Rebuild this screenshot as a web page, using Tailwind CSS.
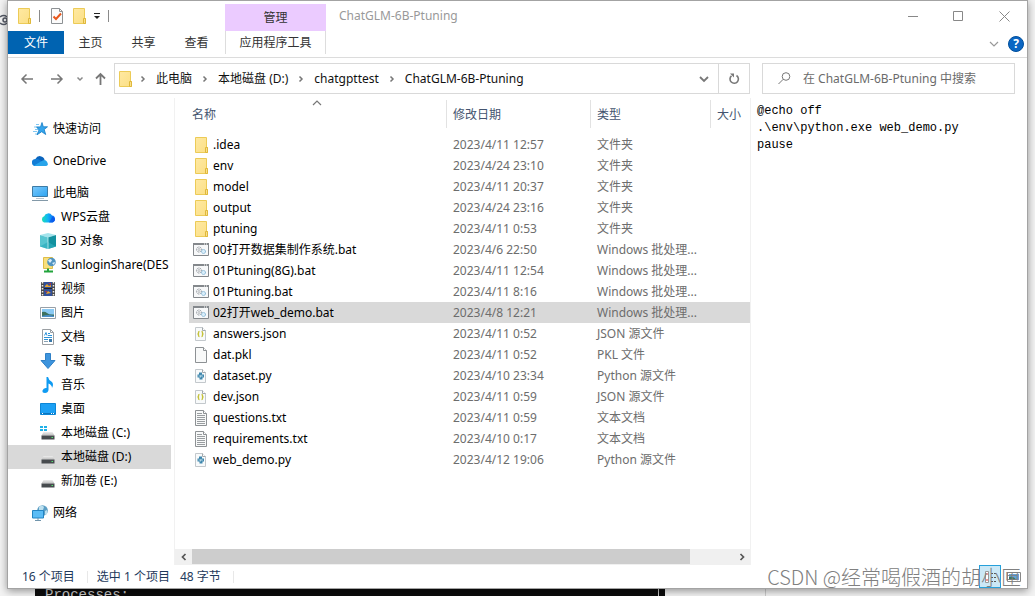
<!DOCTYPE html>
<html lang="zh-CN">
<head>
<meta charset="utf-8">
<title>ChatGLM-6B-Ptuning</title>
<script src="https://cdn.jsdelivr.net/npm/@tailwindcss/browser@4"></script>
</head>
<body class="bg-[#f3f3f3] font-['Noto_Sans','Noto_Sans_CJK_SC',sans-serif] text-xs text-black">
<svg class="absolute size-0" aria-hidden="true">
  <defs>
    <linearGradient id="gFold" x1="0" y1="0" x2="1" y2="1"><stop offset="0" stop-color="#ffe9a2"/><stop offset="1" stop-color="#fbdf85"/></linearGradient>
    <linearGradient id="gBlue" x1="0" y1="0" x2="1" y2="1"><stop offset="0" stop-color="#7cc9fb"/><stop offset="1" stop-color="#2ca4f2"/></linearGradient>
    <linearGradient id="gWps" x1="0" y1="0" x2="1" y2="0"><stop offset="0" stop-color="#1ce0b4"/><stop offset=".45" stop-color="#12b4f5"/><stop offset="1" stop-color="#0a5cf5"/></linearGradient>
    <linearGradient id="gDrive" x1="0" y1="0" x2="0" y2="1"><stop offset="0" stop-color="#eeeeee"/><stop offset="1" stop-color="#bcbcbc"/></linearGradient>
  </defs>
  <symbol id="folder" viewBox="0 0 16 16"><path d="M2.5.5h11v9.500l1 .5v5h-12z" fill="url(#gFold)" stroke="#eccb57"/><path d="M12.500 15.500v-5h2v5z" fill="#fbe08a" stroke="#dfb83c"/></symbol>
  <symbol id="bat" viewBox="0 0 16 16"><path d="M.5 1.500h15v12H.5z" fill="#f7f8f9" stroke="#84888c"/><path d="M0 1h16v2H0z" fill="#84888c"/><path d="M11 2h1M13 2h1" stroke="#fff"/><circle cx="6" cy="7.500" r="2.500" fill="none" stroke="#8c9299" stroke-dasharray="1.200 .6"/><circle cx="6" cy="7.500" r="1" fill="none" stroke="#9da3a8" stroke-width=".7"/><circle cx="10.500" cy="9.500" r="2" fill="#d9eefa" stroke="#7aaed0" stroke-dasharray="1.200 .5"/></symbol>
  <symbol id="page" viewBox="0 0 16 16"><path d="M2.500.5h8l3 3v12h-11z" fill="#f8f9f9" stroke="#8d9194"/><path d="M10.500.5v3h3" fill="#fff" stroke="#8d9194"/></symbol>
  <symbol id="json" viewBox="0 0 16 16"><path d="M2.500 1.500h7l3 3v10h-10z" fill="#f8fafb" stroke="#c3c8cc"/><path d="M9.500 1.500v3h3" fill="#fff" stroke="#a3a8ac"/><path d="M6.500 5.500q-1 0-1 1v1l-.5.5.500.5v1q0 1 1 1M8.500 5.500q1 0 1 1v1l.5.5-.5.5v1q0 1-1 1" fill="none" stroke="#c5c23a" stroke-width="1.300"/></symbol>
  <symbol id="py" viewBox="0 0 16 16"><path d="M2.500 1.500h7l3 3v10h-10z" fill="#f8fafb" stroke="#c3c8cc"/><path d="M9.500 1.500v3h3" fill="#fff" stroke="#a3a8ac"/><path d="M6 4.500h3v2h2v3H9.500v2h-3v-2h-2v-3H6z" fill="#3f87ad"/><path d="M5.500 8h2.500V6.800M7.500 9.500v-1.400H10" fill="none" stroke="#cfe5f0" stroke-width=".7"/></symbol>
  <symbol id="txt" viewBox="0 0 16 16"><use href="#page"/><path d="M4 3.500h5M4 5.500h8M4 7.500h8M4 9.500h8M4 11.500h8M4 13.500h8" stroke="#999da0"/></symbol>
  <symbol id="star" viewBox="0 0 16 16"><path d="M10 1.500l1.300 4.300h4.200l-3.300 2.700 1.500 5-4-2.800L5 13.800l2-4.900-2.500-3h4z" fill="#35a5ec" stroke="#157cc5" stroke-width=".8"/><path d="M4 3.500h3M2 6h3M3 8.500h3M1 10.500h4M3 13h2" stroke="#5fb9ef" stroke-width=".8"/></symbol>
  <symbol id="cloud" viewBox="0 0 16 16"><path d="M3.500 6A4.800 4.800 0 0 1 12.600 7L9 11H1.500z" fill="#0a64bd"/><path d="M3.400 5.900Q5.500 5.300 7.500 7l5.500 3-4 3H3.600A3.500 3.500 0 0 1 3.400 5.900z" fill="#137dd6"/><path d="M2 12.600 9 8.500q4-3.200 6 .2Q17.500 13 13 13H3.600q-1 0-1.600-.4z" fill="#28a4ea"/></symbol>
  <symbol id="pc" viewBox="0 0 16 16"><path d="M.5 1.500h15v10H.5z" fill="url(#gBlue)" stroke="#3d7ba5"/><path d="M4 13.500h8" stroke="#b8c5ce"/><path d="M0 15.500h16" stroke="#8399a8"/></symbol>
  <symbol id="wps" viewBox="0 0 16 16"><path d="M4 13.500a3.300 3.300 0 0 1 .2-6.200A4.300 4.300 0 0 1 12 6.500a3.600 3.600 0 0 1 .5 7z" fill="url(#gWps)"/><path d="M9 13.500l3.500-6q2.500 1.500 2.500 4l-2.500 2z" fill="#0a52e8" opacity=".7"/></symbol>
  <symbol id="cube" viewBox="0 0 16 16"><path d="M0 2l8-2 8 2-8 2.500z" fill="#a4e4ec"/><path d="M0 2l8 2.500V16l-8-2.500z" fill="#57c5d0"/><path d="M16 2L8 4.500V16l8-2.500z" fill="#12919f"/><path d="M0 13.500l8-4.500 8 4.500L8 16z" fill="#2cadbc" opacity=".7"/><path d="M8 4.500V16" stroke="#e1fafa" stroke-width=".7"/></symbol>
  <symbol id="share" viewBox="0 0 16 16"><path d="M3.500.5h9v11h-9z" fill="#f8df7c" stroke="#dfbd47"/><circle cx="11.500" cy="5" r="4.300" fill="#5194bf"/><path d="M8 3.500q3-3 4 0L10 6zm4 2.500l3-1-1 3z" fill="#dceefb"/><path d="M8 11.500v3M4 14.500h9" stroke="#22a43c" stroke-width="2"/></symbol>
  <symbol id="video" viewBox="0 0 16 16"><path d="M1 1h14v14H1z" fill="#4b4b4b"/><path d="M4 1h8v14H4z" fill="#31509a"/><path d="M4 7.500h8" stroke="#222"/><path d="M5 5l2-2 2 2 2-1v2H5zM6 13l2-3 3 2z" fill="#e5a331"/><path d="M8 2h3v2zM5 10h2v2z" fill="#b93939"/><path d="M2.500 1v14M13.500 1v14" stroke="#eee" stroke-width="1.500" stroke-dasharray="1.500 1.500"/></symbol>
  <symbol id="pic" viewBox="0 0 16 16"><path d="M.5 2.500h15v11H.5z" fill="#fff" stroke="#97a0a8"/><path d="M2 4h12v8H2z" fill="#8ac9f3"/><path d="M2 7q3-1 5 1t7 1.500V12H2z" fill="#3d715f"/><path d="M2 11q7-2 12 0v1H2z" fill="#4a8fc8"/></symbol>
  <symbol id="doc" viewBox="0 0 16 16"><path d="M2.500.5h8l3 3v12h-11z" fill="#fff" stroke="#9a9fa3"/><path d="M10.500.5v3h3" fill="none" stroke="#9a9fa3"/><path d="M4.500 6.500l1.500-3 1 3M8 4.500h2M8 6.500h4M4 8.500h8M4 10.500h4" stroke="#2e93d8" fill="none"/><path d="M4 12.500h4" stroke="#8ba3b4"/><path d="M9 10h3v3H9z" fill="#3a79aa"/></symbol>
  <symbol id="down" viewBox="0 0 16 16"><path d="M5.500.5h5v7h4.500L8 15.500 1 7.500h4.500z" fill="#3d94dd" stroke="#2f80c6"/></symbol>
  <symbol id="music" viewBox="0 0 16 16"><path d="M6.500 0H8q.5 3 4 5 2 2.500 0 6 0-3-3.500-4.500V13Q8 16 5 16q-3 0-2.500-2.500Q3.500 10.500 6.500 11z" fill="#0f9bf2"/></symbol>
  <symbol id="desk" viewBox="0 0 16 16"><path d="M.5 2.500h15v11H.5z" fill="#1ca0f4" stroke="#0c86d6"/><path d="M1 12.500h14" stroke="#0b74bd"/><path d="M2 12.500h1M11 12.500h1M13 12.500h1" stroke="#fff"/></symbol>
  <symbol id="drive" viewBox="0 0 16 16"><path d="M3.500 7h9l2 3.500h-13z" fill="url(#gDrive)"/><path d="M1.500 10.500h13v4h-13z" fill="#474b4e"/><path d="M11.500 12.500h1.500" stroke="#53e26f"/></symbol>
  <symbol id="drivec" viewBox="0 0 16 16"><use href="#drive"/><path d="M0 1h3v2H0zM4 1h3v2H4zM0 4h3v2H0zM4 4h3v2H4z" fill="#1fb1e8"/></symbol>
  <symbol id="net" viewBox="0 0 16 16"><circle cx="10.500" cy="5.500" r="5.300" fill="#5c9ec4"/><path d="M7 2q3-3 5 0l-1 3-4 1zM13 6l2-1v4l-2 1z" fill="#bde0ef"/><path d="M.5 5.500h11v7.500H.5z" fill="#5bbcf5" stroke="#2384c2"/><path d="M6 13v2M3 15.500h6" stroke="#7195ac"/></symbol>
  <symbol id="chev" viewBox="0 0 8 8"><path d="M2.500 1.500L5 4 2.500 6.500" fill="none" stroke="#777" stroke-width="1.500"/></symbol>
</svg>

<div class="relative flex min-h-screen flex-col px-[7px]">
  <svg class="absolute left-0 top-[14px] h-3 w-[7px]" viewBox="0 0 7 12" fill="none" stroke="#555a66" stroke-width="1.500"><path d="M0 3q4-3 7 0M0 9q4 3 7 0"/><circle cx="5" cy="6" r="2"/></svg>

  <main class="z-10 flex flex-1 flex-col border border-[#a3a3a3] bg-white shadow-[0_2px_8px_#0006]">
    <header>
      <div class="flex items-stretch">
        <div class="flex w-[217px] shrink-0 flex-col">
          <div class="flex h-[30px] items-center pl-2">
            <svg class="size-4"><use href="#folder"/></svg>
            <span class="ml-[7px] h-3 w-px bg-[#8a8a8a]"></span>
            <button class="ml-[9px]" aria-label="属性"><svg class="size-4" viewBox="0 0 16 16"><path d="M2.500.5h8l3 3v12h-11z" fill="#fbfbfb" stroke="#8d9194"/><path d="M10.500.5v3h3" fill="none" stroke="#8d9194"/><path d="M4.500 8.500L7 11l5-5.500" fill="none" stroke="#e8571c" stroke-width="2"/></svg></button>
            <button class="ml-[6px]" aria-label="新建文件夹"><svg class="size-4"><use href="#folder"/></svg></button>
            <button class="ml-[6px]" aria-label="自定义快速访问工具栏"><svg class="size-2" viewBox="0 0 8 8"><path d="M1 1.500h6" stroke="#222"/><path d="M1 4h6L4 7z" fill="#222"/></svg></button>
            <span class="ml-[7px] h-3 w-px bg-[#8a8a8a]"></span>
          </div>
          <nav class="flex h-[23px] text-[#333] [&_button]:pt-px" aria-label="功能区">
            <button class="w-14 bg-[#0063b1] text-white">文件</button>
            <button class="w-[53px]">主页</button>
            <button class="w-[53px]">共享</button>
            <button class="w-[53px]">查看</button>
          </nav>
        </div>
        <div class="flex w-[101px] shrink-0 flex-col pt-[3px] text-[#333]">
          <div class="flex h-[27px] items-center justify-center bg-[#ebcbff]">管理</div>
          <button class="h-[23px] border-x border-[#ddd] pt-px">应用程序工具</button>
        </div>
        <div class="flex min-w-0 flex-1 flex-col">
          <div class="flex h-[30px] items-center justify-between">
            <h1 class="pl-[13px] text-[#999]">ChatGLM-6B-Ptuning</h1>
            <div class="flex gap-[35px] pr-[17px]">
              <button aria-label="最小化"><svg class="size-[11px]" viewBox="0 0 11 11"><path d="M1 5.500h10" stroke="#888"/></svg></button>
              <button aria-label="最大化"><svg class="size-[11px]" viewBox="0 0 11 11"><path d="M.5.5h9v9h-9z" fill="none" stroke="#888"/></svg></button>
              <button aria-label="关闭"><svg class="size-[11px]" viewBox="0 0 11 11"><path d="M.5.500l10 10M10.500.5l-10 10" stroke="#888"/></svg></button>
            </div>
          </div>
          <div class="flex h-[26px] items-center justify-end gap-[9px] pr-[3px]">
            <button aria-label="展开功能区"><svg class="h-2 w-[10px]" viewBox="0 0 10 8"><path d="M1 2l4 4 4-4" fill="none" stroke="#999" stroke-width="1.200"/></svg></button>
            <button class="flex size-4 items-center justify-center rounded-full border border-[#004f9c] bg-[#0b66c3] text-xs font-bold text-white" aria-label="帮助">?</button>
          </div>
        </div>
      </div>
      <div class="flex items-center border-t border-[#dcdcdc] pb-1 pt-[5px] pr-3 text-[#111]">
        <button class="ml-3" aria-label="后退"><svg class="size-[14px]" viewBox="0 0 14 14"><path d="M13 7H2M6.500 2.500L2 7l4.500 4.500" fill="none" stroke="#777" stroke-width="1.500"/></svg></button>
        <button class="ml-4" aria-label="前进"><svg class="size-[14px]" viewBox="0 0 14 14"><path d="M1 7h11M7.500 2.500L12 7l-4.500 4.500" fill="none" stroke="#777" stroke-width="1.500"/></svg></button>
        <button class="ml-[12px]" aria-label="最近浏览的位置"><svg class="size-2" viewBox="0 0 8 8"><path d="M1.500 2.500L4 5l2.500-2.500" fill="none" stroke="#888" stroke-width="1.500"/></svg></button>
        <button class="ml-[9px]" aria-label="上移"><svg class="size-[14px]" viewBox="0 0 14 14"><path d="M7.500 13V2M3 6.500L7.500 2 12 6.500" fill="none" stroke="#777" stroke-width="1.800"/></svg></button>
        <div class="ml-[7px] flex h-[31px] flex-1 items-center border border-[#d9d9d9] whitespace-nowrap">
          <svg class="ml-[2px] size-4"><use href="#folder"/></svg>
          <svg class="ml-[6px] size-2"><use href="#chev"/></svg>
          <a href="#" class="ml-[9px]">此电脑</a>
          <svg class="ml-[9px] size-2"><use href="#chev"/></svg>
          <a href="#" class="ml-[9px]">本地磁盘 (D:)</a>
          <svg class="ml-[9px] size-2"><use href="#chev"/></svg>
          <a href="#" class="ml-[9px]">chatgpttest</a>
          <svg class="ml-[9px] size-2"><use href="#chev"/></svg>
          <a href="#" class="ml-[9px]">ChatGLM-6B-Ptuning</a>
          <button class="ml-auto mr-[9px]" aria-label="以前的位置"><svg class="size-[10px]" viewBox="0 0 10 10"><path d="M1 3l4 4 4-4" fill="none" stroke="#777" stroke-width="1.800"/></svg></button>
          <button class="flex h-full w-[31px] items-center justify-center border-l border-[#d9d9d9]" aria-label="刷新"><svg class="size-3" viewBox="0 0 12 12"><path d="M8.500 2.500A4.200 4.200 0 1 1 3.500 2.800" fill="none" stroke="#777" stroke-width="1.600"/><path d="M2 .5h4v4z" fill="#777"/></svg></button>
        </div>
        <label class="ml-3 flex h-[31px] w-[253px] items-center border border-[#d9d9d9]">
          <svg class="ml-[15px] size-[13px] shrink-0" viewBox="0 0 13 13"><circle cx="8" cy="4.500" r="3.800" fill="none" stroke="#777"/><path d="M5.200 7.300L.5 12" stroke="#777"/></svg>
          <input type="text" aria-label="搜索" placeholder="在 ChatGLM-6B-Ptuning 中搜索" class="ml-3 min-w-0 flex-1 outline-none placeholder:text-[#6b6b6b]">
        </label>
      </div>
    </header>

    <div class="flex flex-1 items-stretch">
      <nav class="w-[167px] shrink-0 overflow-hidden border-r border-[#f1f1f1] pr-[3px] pt-[19px]" aria-label="导航窗格">
        <ul class="flex flex-col gap-2 whitespace-nowrap [&_a]:flex [&_a]:h-6 [&_a]:items-center [&_a]:gap-[5px] [&_svg]:size-4 [&_svg]:shrink-0">
          <li><a href="#" class="pl-6"><svg><use href="#star"/></svg>快速访问</a></li>
          <li><a href="#" class="pl-6"><svg><use href="#cloud"/></svg>OneDrive</a></li>
          <li><a href="#" class="pl-6"><svg><use href="#pc"/></svg>此电脑</a>
            <ul class="[&_a]:pl-8">
              <li><a href="#"><svg><use href="#wps"/></svg>WPS云盘</a></li>
              <li><a href="#"><svg><use href="#cube"/></svg>3D 对象</a></li>
              <li class="overflow-hidden"><a href="#"><svg><use href="#share"/></svg>SunloginShare(DES</a></li>
              <li><a href="#"><svg><use href="#video"/></svg>视频</a></li>
              <li><a href="#"><svg><use href="#pic"/></svg>图片</a></li>
              <li><a href="#"><svg><use href="#doc"/></svg>文档</a></li>
              <li><a href="#"><svg><use href="#down"/></svg>下载</a></li>
              <li><a href="#"><svg><use href="#music"/></svg>音乐</a></li>
              <li><a href="#"><svg><use href="#desk"/></svg>桌面</a></li>
              <li><a href="#"><svg><use href="#drivec"/></svg>本地磁盘 (C:)</a></li>
              <li><a href="#" class="bg-[#d9d9d9]" aria-current="true"><svg><use href="#drive"/></svg>本地磁盘 (D:)</a></li>
              <li><a href="#"><svg><use href="#drive"/></svg>新加卷 (E:)</a></li>
            </ul>
          </li>
          <li><a href="#" class="pl-6"><svg><use href="#net"/></svg>网络</a></li>
        </ul>
      </nav>

      <section class="flex min-w-0 flex-1 flex-col" aria-label="文件列表">
        <div class="relative flex-1 pl-[14px] pt-[2px]">
          <svg class="absolute left-[137px] top-[2px] h-[6px] w-[10px]" viewBox="0 0 10 6"><path d="M1 5l4-4 4 4" fill="none" stroke="#777" stroke-width="1.200"/></svg>
          <table class="w-full table-fixed border-separate border-spacing-0 whitespace-nowrap text-[#6d6d6d] [&_td]:h-[21px] [&_td]:overflow-hidden [&_td]:p-0 [&_td]:pl-[6px] [&_td:first-child]:pl-1 [&_td:first-child]:text-black [&_svg]:size-4 [&_td>div]:flex [&_td>div]:items-center [&_td>div]:gap-1">
            <colgroup><col class="w-[258px]"><col class="w-[144px]"><col class="w-[120px]"><col></colgroup>
            <thead class="text-left text-[#44546f] [&_th]:h-7 [&_th]:border-r [&_th]:border-[#e2e2e2] [&_th]:p-0 [&_th]:pl-[6px] [&_th]:pt-[2px] [&_th]:font-normal">
              <tr><th class="pl-[3px]!">名称</th><th>修改日期</th><th>类型</th><th class="border-r-0!">大小</th></tr>
            </thead>
            <tbody>
              <tr aria-hidden="true"><td colspan="4" class="h-[6px]!"></td></tr>
              <tr><td><div><svg><use href="#folder"/></svg>.idea</div></td><td>2023/4/11 12:57</td><td>文件夹</td><td></td></tr>
              <tr><td><div><svg><use href="#folder"/></svg>env</div></td><td>2023/4/24 23:10</td><td>文件夹</td><td></td></tr>
              <tr><td><div><svg><use href="#folder"/></svg>model</div></td><td>2023/4/11 20:37</td><td>文件夹</td><td></td></tr>
              <tr><td><div><svg><use href="#folder"/></svg>output</div></td><td>2023/4/24 23:16</td><td>文件夹</td><td></td></tr>
              <tr><td><div><svg><use href="#folder"/></svg>ptuning</div></td><td>2023/4/11 0:53</td><td>文件夹</td><td></td></tr>
              <tr><td><div><svg><use href="#bat"/></svg>00打开数据集制作系统.bat</div></td><td>2023/4/6 22:50</td><td>Windows 批处理...</td><td></td></tr>
              <tr><td><div><svg><use href="#bat"/></svg>01Ptuning(8G).bat</div></td><td>2023/4/11 12:54</td><td>Windows 批处理...</td><td></td></tr>
              <tr><td><div><svg><use href="#bat"/></svg>01Ptuning.bat</div></td><td>2023/4/11 8:16</td><td>Windows 批处理...</td><td></td></tr>
              <tr class="bg-[#d9d9d9]"><td><div><svg><use href="#bat"/></svg>02打开web_demo.bat</div></td><td>2023/4/8 12:21</td><td>Windows 批处理...</td><td></td></tr>
              <tr><td><div><svg><use href="#json"/></svg>answers.json</div></td><td>2023/4/11 0:52</td><td>JSON 源文件</td><td></td></tr>
              <tr><td><div><svg><use href="#page"/></svg>dat.pkl</div></td><td>2023/4/11 0:52</td><td>PKL 文件</td><td></td></tr>
              <tr><td><div><svg><use href="#py"/></svg>dataset.py</div></td><td>2023/4/10 23:34</td><td>Python 源文件</td><td></td></tr>
              <tr><td><div><svg><use href="#json"/></svg>dev.json</div></td><td>2023/4/11 0:59</td><td>JSON 源文件</td><td></td></tr>
              <tr><td><div><svg><use href="#txt"/></svg>questions.txt</div></td><td>2023/4/11 0:59</td><td>文本文档</td><td></td></tr>
              <tr><td><div><svg><use href="#txt"/></svg>requirements.txt</div></td><td>2023/4/10 0:17</td><td>文本文档</td><td></td></tr>
              <tr><td><div><svg><use href="#py"/></svg>web_demo.py</div></td><td>2023/4/12 19:06</td><td>Python 源文件</td><td></td></tr>
            </tbody>
          </table>
        </div>
        <div class="flex h-4 items-stretch bg-[#f0f0f0]">
          <button class="flex w-[17px] items-center justify-center" aria-label="向左滚动"><svg class="size-2" viewBox="0 0 8 8"><path d="M5.500 1l-3 3 3 3" fill="none" stroke="#555" stroke-width="1.700"/></svg></button>
          <div class="flex-1"><div class="h-[15px] w-[92%] bg-[#cdcdcd]"></div></div>
          <button class="flex w-[17px] items-center justify-center" aria-label="向右滚动"><svg class="size-2" viewBox="0 0 8 8"><path d="M2.500 1l3 3-3 3" fill="none" stroke="#555" stroke-width="1.700"/></svg></button>
        </div>
      </section>

      <aside class="w-[277px] shrink-0 border-l border-[#f1f1f1] pl-[6px] pt-[5px] text-xs leading-[17px]" aria-label="预览">
        <pre class="font-['Liberation_Mono',monospace]">@echo off
.\env\python.exe web_demo.py
pause</pre>
      </aside>
    </div>

    <footer class="relative flex h-[23px] items-center pl-[14px] text-[#1e395b]">
      <span>16 个项目</span>
      <span class="ml-3 h-3 w-px bg-[#e8e8e8]"></span>
      <span class="ml-[9px]">选中 1 个项目</span>
      <span class="ml-[10px]">48 字节</span>
      <span class="ml-3 h-3 w-px bg-[#e8e8e8]"></span>
      <div class="ml-auto flex items-center gap-[5px]">
        <button class="flex h-[23px] w-[22px] items-center justify-center border border-[#26a0da] bg-[#cbe8f6]" aria-label="详细信息"><svg class="size-4" viewBox="0 0 16 16"><path d="M3.500 2.500h3v11h-3z" fill="#fff" stroke="#999"/><path d="M5 4v2M5 10v2" stroke="#d33"/><path d="M9 4.500h2M12 4.500h2M9 8.500h2M12 8.500h2M9 12.500h2M12 12.500h2" stroke="#555"/></svg></button>
        <button class="mr-[5px]" aria-label="大缩略图"><svg class="size-4" viewBox="0 0 16 16"><path d="M1.500 3.500h13v9h-13z" fill="#fff" stroke="#888"/><path d="M3 5h10v6H3z" fill="#64a3dc"/><path d="M3 8q5-1 7 3H3z" fill="#3c7560"/></svg></button>
      </div>
      <p class="absolute bottom-0 right-[6px] whitespace-nowrap font-['Noto_Sans_CJK_SC',sans-serif] text-xl leading-[22px] font-light text-[#808080]">CSDN @经常喝假酒的胡小匣</p>
    </footer>
  </main>

  <div class="flex h-[7px] items-start overflow-hidden pl-[28px] pr-[7px]">
    <div class="flex h-[7px] w-[630px] justify-between overflow-hidden bg-[#0c0c0c] pl-[10px] pr-[6px] font-['Liberation_Mono',monospace] text-sm leading-[13px] text-[#ccc]">Processes:<span class="w-px bg-[#ccc]"></span></div>
    <div class="ml-[100px] h-[7px] w-px bg-[#ccc]"></div>
  </div>
</div>
</body>
</html>
